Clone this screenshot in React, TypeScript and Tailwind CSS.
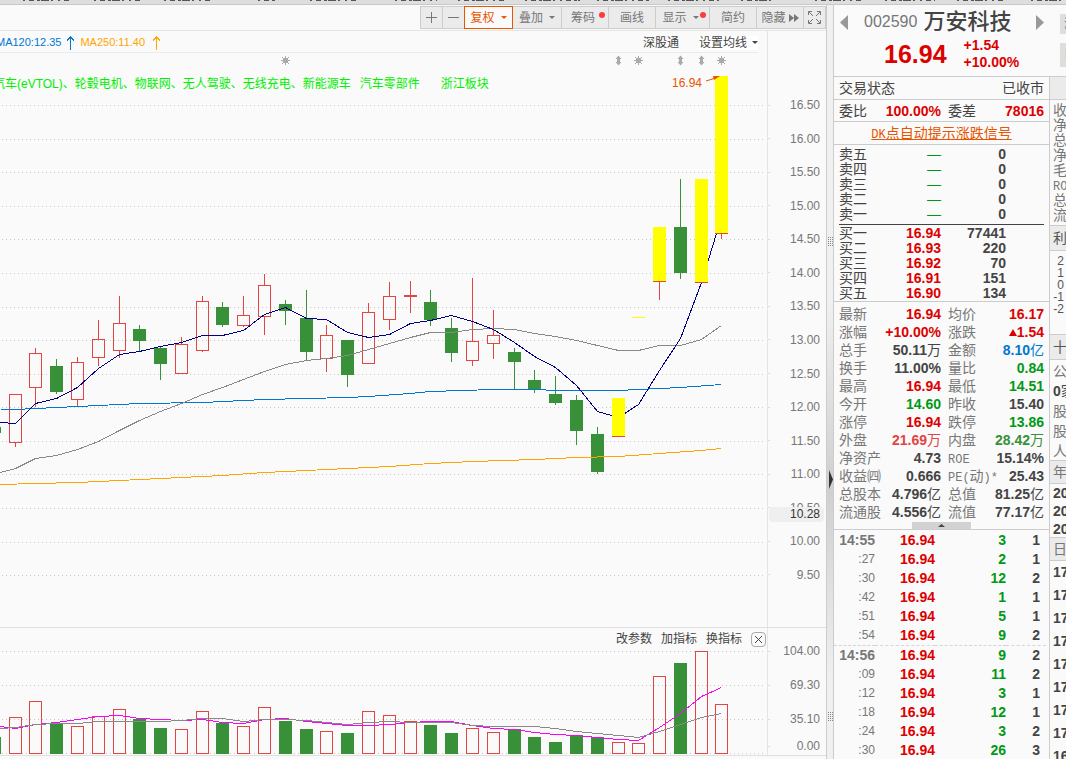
import React from "react";
import clsx from "clsx";

type Kind = "up" | "down" | "limit" | "flat";

// x, open/close top, open/close bottom, high, low, volume top
type Candle = [Kind, number, number, number, number, number, number];

const candles: Candle[] = [
  ["down", -6, 427, 433, 427, 433, 737],
  ["up", 15, 394, 442, 394, 447, 717],
  ["up", 35, 353, 387, 348, 407, 701],
  ["down", 56, 366, 392, 359, 394, 723],
  ["up", 77, 362, 399, 357, 406, 726],
  ["up", 98, 339, 357, 320, 366, 716],
  ["up", 119, 323, 350, 296, 358, 709],
  ["down", 139, 329, 341, 325, 352, 719],
  ["down", 160, 348, 364, 346, 380, 728],
  ["up", 181, 344, 373, 337, 373, 729],
  ["up", 202, 301, 350, 296, 352, 711],
  ["down", 222, 307, 325, 302, 327, 723],
  ["up", 243, 315, 325, 296, 327, 726],
  ["up", 264, 285, 316, 274, 335, 707],
  ["down", 285, 304, 311, 300, 325, 721],
  ["down", 306, 318, 352, 290, 360, 729],
  ["up", 326, 335, 358, 325, 372, 731],
  ["down", 347, 340, 375, 340, 387, 733],
  ["up", 368, 312, 363, 303, 363, 711],
  ["up", 389, 296, 319, 282, 330, 715],
  ["up", 410, 295, 296, 281, 313, 721],
  ["down", 430, 302, 320, 290, 326, 725],
  ["down", 451, 328, 353, 318, 362, 733],
  ["up", 472, 341, 360, 278, 366, 728],
  ["up", 493, 335, 343, 310, 359, 732],
  ["down", 514, 352, 362, 348, 389, 729],
  ["down", 534, 380, 389, 370, 393, 737],
  ["down", 555, 394, 403, 376, 405, 742],
  ["down", 576, 400, 431, 395, 445, 735],
  ["down", 597, 434, 472, 427, 474, 737],
  ["limit", 618, 398, 436, 398, 436, 742],
  ["flat", 638, 317, 317, 317, 317, 743],
  ["limit", 659, 227, 281, 227, 299, 676],
  ["down", 680, 227, 273, 179, 279, 663],
  ["limit", 701, 179, 282, 179, 282, 651],
  ["limit", 721, 76, 233, 76, 238, 704],
];

const ma5 =
  "0,422 15,423 35,403 56,398 77,387 98,368 119,354 139,351 160,346 181,342 202,335 222,335 243,330 264,314 285,307 306,318 326,319 347,332 368,337 389,334 410,323 430,320 451,315 472,321 493,329 514,342 534,356 555,367 576,385 597,411 618,417 638,404 659,370 680,338 701,282 716,233 721,220";
const ma20 =
  "0,472 15,468 35,458 56,455 77,449 98,441 119,430 139,420 160,411 181,403 202,394 222,387 243,379 264,371 285,364 306,360 326,358 347,355 368,349 389,343 410,337 430,332 451,332 472,329 493,328 514,329 534,333 555,336 576,340 597,345 618,350 638,350 659,345 680,345 701,339 721,325";
const ma120 =
  "0,409 15,409 35,408 77,406 98,405 139,403 202,402 264,399 306,398 347,397 368,396 410,393 430,391 493,389 514,389 576,390 618,390 638,389 680,387 721,384";
const ma250 =
  "0,484 35,483 77,482 119,480 160,478 222,475 264,472 306,470 347,468 389,466 430,463 472,461 534,459 555,458 576,457 618,456 659,453 701,450 721,448";
const volFast =
  "0,726 15,728 35,724 56,722 77,719 98,716 119,715 139,718 160,719 181,720 202,719 222,722 243,723 264,719 285,718 306,721 326,723 347,725 368,725 389,724 410,722 430,721 451,721 472,725 493,728 514,729 534,732 555,734 576,735 597,737 618,739 638,740 659,727 680,713 701,696 721,687";
const volSlow =
  "0,728 15,727 35,724 56,723 77,723 98,721 160,721 181,720 202,718 222,718 243,721 264,719 285,719 306,720 347,724 368,722 389,721 410,722 451,722 472,725 493,726 534,726 555,728 576,731 597,733 618,735 638,737 659,731 680,724 701,717 721,713";

const gridY = [105, 139, 172, 206, 239, 273, 307, 340, 374, 407, 441, 474, 508, 542, 575];
const priceLabels = [
  "16.50", "16.00", "15.50", "15.00", "14.50", "14.00", "13.50", "13.00",
  "12.50", "12.00", "11.50", "11.00", "10.50", "10.00", "9.50",
];

const RED = "#e34444";
const GREEN = "#389038";
const ORANGE = "#e85400";

const tabs: [number, number][] = [
  [23, 69], [94, 143], [164, 213], [258, 276], [310, 358], [395, 437], [458, 505], [525, 580],
  [597, 650], [668, 719], [741, 775], [815, 862], [885, 935], [957, 1005], [1031, 1066],
];

function TabStrip() {
  return (
    <div className="h-[5px] shrink-0 overflow-hidden border-b border-[#c8c8c8] bg-[#dedede]">
      <svg width="1066" height="1" shapeRendering="crispEdges" aria-hidden="true">
        {tabs.map(([a, b]) => (
          <line key={a} x1={a} x2={b} y1="0.5" y2="0.5" stroke="#555" strokeDasharray="2 4 5 3 3 1 8 2 2 5" />
        ))}
      </svg>
    </div>
  );
}

function Caret({ className }: { className?: string }) {
  return (
    <svg width="6" height="3" viewBox="0 0 6 3" className={clsx("shrink-0", className)} aria-hidden="true">
      <path d="M0 0h6L3 3z" fill="currentColor" />
    </svg>
  );
}

function Dot() {
  return <span className="absolute top-[5px] right-[3px] size-[6px] rounded-full bg-[#ff3b3b]" />;
}

const toolBtn =
  "relative flex h-[23px] items-center justify-center border-y border-l border-[#ccc] bg-[#ebebeb] text-xs whitespace-nowrap text-[#777]";

function Toolbar() {
  return (
    <div className="flex h-[26px] shrink-0 justify-end border-b border-[#e5e5e5] pt-px">
      <button className={clsx(toolBtn, "w-[22px]")} aria-label="放大">
        <svg width="11" height="11" shapeRendering="crispEdges">
          <path d="M0 5.5h11M5.5 0v11" stroke="currentColor" />
        </svg>
      </button>
      <button className={clsx(toolBtn, "w-[22px]")} aria-label="缩小">
        <svg width="11" height="11" shapeRendering="crispEdges">
          <path d="M0 5.5h11" stroke="currentColor" />
        </svg>
      </button>
      <button className="flex h-[23px] w-[49px] items-center justify-center gap-[6px] border border-[#e85400] bg-[#fafafa] text-xs text-[#e85400]">
        复权
        <Caret />
      </button>
      <button className={clsx(toolBtn, "w-[48px] gap-[6px] border-l-0")}>
        叠加
        <Caret />
      </button>
      <button className={clsx(toolBtn, "w-[47px] pr-1")}>
        筹码
        <Dot />
      </button>
      <button className={clsx(toolBtn, "w-[47px]")}>画线</button>
      <button className={clsx(toolBtn, "w-[54px] gap-[6px] pr-1")}>
        显示
        <Caret />
        <Dot />
      </button>
      <button className={clsx(toolBtn, "w-[47px]")}>简约</button>
      <button className={clsx(toolBtn, "w-[47px] gap-[3px]")}>
        隐藏
        <svg width="10" height="8" viewBox="0 0 10 8">
          <path d="M0 0l5 4-5 4zM5 0l5 4-5 4z" fill="currentColor" />
        </svg>
      </button>
      <button className={clsx(toolBtn, "w-[23px] border-r")} aria-label="全屏">
        <svg width="13" height="13" viewBox="0 0 13 13" fill="none" stroke="currentColor">
          <path d="M.5 4V.5H4M9 .5h3.500V4M12.500 9v3.500H9M4 12.500H.5V9M1 1l4 4M12 1L8 5M12 12L8 8M1 12l4-4" />
        </svg>
      </button>
    </div>
  );
}

function UpArrow({ className }: { className: string }) {
  return (
    <svg width="7" height="14" viewBox="0 0 7 14" className={className} fill="none" stroke="currentColor" shapeRendering="crispEdges">
      <path d="M3.500 0v14M.5 5V4L3.500 1l3 3v1" />
    </svg>
  );
}

function InfoLine() {
  return (
    <div className="flex h-[22px] flex-1 items-center overflow-hidden border-b border-[#ebebeb] pt-[2px] whitespace-nowrap">
      <span className="-ml-1 text-[11px] text-[#0078d0]">MA120:12.35</span>
      <UpArrow className="ml-[6px] shrink-0 text-[#0078d0]" />
      <span className="ml-[6px] text-[11px] text-[#ffa500]">MA250:11.40</span>
      <UpArrow className="ml-[8px] shrink-0 text-[#ffa500]" />
      <a href="#sgt" className="ml-auto text-xs text-[#444]">深股通</a>
      <button className="ml-5 flex items-center gap-[5px] bg-white text-xs leading-[14px] text-[#444]">
        设置均线
        <Caret />
      </button>
    </div>
  );
}

function Sun({ x }: { x: number }) {
  return (
    <g transform={`translate(${x} 60)`} stroke="#aaa" fill="#aaa">
      <rect x="-2" y="-2" width="5" height="5" stroke="none" />
      <path d="M.5-4v9M-4 .5h9M-3-3l7 7M4-3l-7 7" />
    </g>
  );
}

function Split({ x }: { x: number }) {
  return (
    <path transform={`translate(${x} 60)`} d="M.5-4.500L3.500-1H2v3h1.500L.5 5.500-2.500 2H-1v-3h-1.500z" fill="#aaa" />
  );
}

function CandleShape({ c }: { c: Candle }) {
  const [kind, x, top, bottom, high, low] = c;
  if (kind === "flat") return <rect x={x - 6} y={top} width="13" height="1" fill="#ffff00" />;
  if (kind === "limit") {
    return (
      <g>
        <rect x={x - 6} y={top} width="13" height={bottom - top} fill="#ffff00" />
        <rect x={x - 6} y={bottom} width="13" height="1" fill={RED} />
        {low > bottom && <rect x={x} y={bottom} width="1" height={low - bottom + 1} fill={RED} />}
      </g>
    );
  }
  if (kind === "down") {
    return (
      <g fill={GREEN}>
        <rect x={x} y={high} width="1" height={low - high} />
        <rect x={x - 6} y={top} width="13" height={bottom - top} />
      </g>
    );
  }
  return (
    <g>
      <rect x={x} y={high} width="1" height={top - high} fill={RED} />
      <rect x={x} y={bottom} width="1" height={low - bottom} fill={RED} />
      <rect x={x - 5.5} y={top + 0.5} width="12" height={bottom - top} fill="none" stroke={RED} />
    </g>
  );
}

function Grid({ rows }: { rows: number[] }) {
  return (
    <g stroke="#c8c8c8" strokeDasharray="1 3">
      {rows.map((y) => (
        <line key={y} x1="2" x2="764" y1={y + 0.5} y2={y + 0.5} />
      ))}
    </g>
  );
}

function PriceChart() {
  const limits = candles.filter((c) => c[0] === "limit" || c[0] === "flat");
  const plain = candles.filter((c) => c[0] === "up" || c[0] === "down");
  return (
    <svg width="767" height="574" viewBox="0 53 767 574" className="shrink-0" role="img" aria-label="K线图">
      <g shapeRendering="crispEdges">
        <Grid rows={gridY} />
        {plain.map((c) => (
          <CandleShape key={c[1]} c={c} />
        ))}
        <g fill="none" transform="translate(.5 .5)">
          <polyline points={ma250} stroke="#ffa500" />
          <polyline points={ma120} stroke="#0078d0" />
          <polyline points={ma20} stroke="#888" />
          <polyline points={ma5} stroke="#000080" />
        </g>
        {limits.map((c) => (
          <CandleShape key={c[1]} c={c} />
        ))}
      </g>
      {[285, 638, 721].map((x) => (
        <Sun key={x} x={x} />
      ))}
      {[618, 680, 701].map((x) => (
        <Split key={x} x={x} />
      ))}
      <text x="672" y="87" fontSize="12" fill={ORANGE}>16.94</text>
      <path d="M706 81l8-2.500" stroke={ORANGE} />
      <path d="M713 76h7l-6 4z" fill={ORANGE} />
    </svg>
  );
}

function VolumeChart() {
  return (
    <svg width="767" height="105" viewBox="0 650 767 105" className="shrink-0" role="img" aria-label="成交量" shapeRendering="crispEdges">
      <Grid rows={[651, 685, 719, 753]} />
      {candles.map(([kind, x, , , , , top]) =>
        kind === "down" ? (
          <rect key={x} x={x - 6} y={top} width="13" height={754 - top} fill={GREEN} />
        ) : (
          <rect key={x} x={x - 5.5} y={top + 0.5} width="12" height={753 - top} fill="none" stroke={RED} />
        )
      )}
      <g fill="none" transform="translate(.5 .5)">
        <polyline points={volFast} stroke="#ff00ff" />
        <polyline points={volSlow} stroke="#888" />
      </g>
    </svg>
  );
}

function AxisLabel({ children }: { children: string }) {
  return (
    <div className="flex h-4 items-center justify-between pr-[6px] text-xs text-[#777]">
      <span className="h-px w-[2px] bg-[#ddd]" />
      {children}
    </div>
  );
}

function ChartPane() {
  return (
    <main className="flex min-w-0 flex-1 flex-col">
      <Toolbar />
      <div className="flex border-b border-[#e0e0e0]">
        <div className="flex min-w-0 flex-1 flex-col">
          <div className="flex pr-[9px]">
            <InfoLine />
          </div>
          <div className="relative flex justify-end overflow-hidden">
            <PriceChart />
            <p className="absolute top-[23px] -left-[7px] text-xs whitespace-pre text-[#00f000]">
              汽车(eVTOL)、轮毂电机、物联网、无人驾驶、无线充电、新能源车
              <span className="ml-[9px]">汽车零部件</span>
              <span className="ml-[21px]">浙江板块</span>
            </p>
          </div>
        </div>
        <div className="relative flex w-[59px] flex-col justify-between border-l border-[#e5e5e5] pt-[66px] pb-11">
          {priceLabels.map((p) => (
            <AxisLabel key={p}>{p}</AxisLabel>
          ))}
          <span className="absolute right-[2px] bottom-[105px] left-px rounded-sm bg-[#efefef] pr-1 text-right text-xs leading-[15px] text-[#333]">
            10.28
          </span>
        </div>
      </div>
      <div className="flex border-b border-[#e0e0e0]">
        <div className="flex min-w-0 flex-1 flex-col items-end overflow-hidden">
          <div className="flex h-[22px] items-center gap-[9px] pr-px text-xs text-[#444]">
            <button>改参数</button>
            <button>加指标</button>
            <button>换指标</button>
            <button className="flex size-[15px] items-center justify-center rounded-sm border border-[#aaa]" aria-label="关闭">
              <svg width="7" height="7" viewBox="0 0 7 7" stroke="#444">
                <path d="M0 0l7 7M7 0L0 7" />
              </svg>
            </button>
          </div>
          <VolumeChart />
        </div>
        <div className="flex w-[59px] flex-col gap-[18px] border-l border-[#e5e5e5] pt-[15px]">
          <AxisLabel>104.00</AxisLabel>
          <AxisLabel>69.30</AxisLabel>
          <AxisLabel>35.10</AxisLabel>
          <div className="-mt-[7px]">
            <AxisLabel>0.00</AxisLabel>
          </div>
        </div>
      </div>
    </main>
  );
}

function Grip() {
  return (
    <svg width="5" height="9" shapeRendering="crispEdges" aria-hidden="true">
      <path d="M0 .5h5M0 2.500h5M0 4.500h5M0 6.500h5M0 8.500h5" stroke="#888" strokeDasharray="1 1" />
    </svg>
  );
}

function Splitter() {
  return (
    <div className="flex w-2 shrink-0 flex-col items-center justify-between border-x border-[#ccc] bg-linear-to-b from-[#f0f0f0] from-40% via-[#cfcfcf] via-64% to-[#f0f0f0] to-90% pt-[232px] pb-[38px]">
      <Grip />
      <button aria-label="收起">
        <svg width="5" height="19" viewBox="0 0 5 19">
          <path d="M1 0l4 9.500L1 19z" fill="#333" />
        </svg>
      </button>
      <Grip />
    </div>
  );
}

const tone = {
  red: "text-[#dd0000]",
  rose: "text-[#e34444]",
  green: "text-[#009916]",
  leaf: "text-[#389038]",
  dark: "text-[#444]",
  blue: "text-[#0078d0]",
};
type Tone = keyof typeof tone;

function Value({ text, color }: { text: string; color: Tone }) {
  const unit = /[万亿]$/.test(text) ? text.slice(-1) : "";
  const num = unit ? text.slice(0, -1) : text;
  return (
    <span className={clsx("font-bold whitespace-nowrap", tone[color])}>
      {num}
      {unit && <span className="font-normal">{unit}</span>}
    </span>
  );
}

function Mono({ children }: { children: React.ReactNode }) {
  return <span className="font-['Liberation_Mono',monospace] text-xs leading-none">{children}</span>;
}

const stats: [string, string, Tone, React.ReactNode, string, Tone][] = [
  ["最新", "16.94", "red", "均价", "16.17", "red"],
  ["涨幅", "+10.00%", "red", "涨跌", "1.54", "red"],
  ["总手", "50.11万", "dark", "金额", "8.10亿", "blue"],
  ["换手", "11.00%", "dark", "量比", "0.84", "green"],
  ["最高", "16.94", "red", "最低", "14.51", "green"],
  ["今开", "14.60", "green", "昨收", "15.40", "dark"],
  ["涨停", "16.94", "red", "跌停", "13.86", "green"],
  ["外盘", "21.69万", "rose", "内盘", "28.42万", "leaf"],
  ["净资产", "4.73", "dark", <Mono>ROE</Mono>, "15.14%", "dark"],
  ["收益㈣", "0.666", "dark", <><Mono>PE(</Mono>动<Mono>)*</Mono></>, "25.43", "dark"],
  ["总股本", "4.796亿", "dark", "总值", "81.25亿", "dark"],
  ["流通股", "4.556亿", "dark", "流值", "77.17亿", "dark"],
];

const sells = ["卖五", "卖四", "卖三", "卖二", "卖一"];
const buys = [
  ["买一", "16.94", "77441"],
  ["买二", "16.93", "220"],
  ["买三", "16.92", "70"],
  ["买四", "16.91", "151"],
  ["买五", "16.90", "134"],
];

const ticks = [
  [
    ["14:55", "3", "1"],
    [":27", "2", "1"],
    [":30", "12", "2"],
    [":42", "1", "1"],
    [":51", "5", "1"],
    [":54", "9", "2"],
  ],
  [
    ["14:56", "9", "2"],
    [":09", "11", "2"],
    [":12", "3", "1"],
    [":18", "12", "1"],
    [":24", "3", "2"],
    [":30", "26", "3"],
  ],
];

function OrderBook() {
  return (
    <div className="border-b border-[#ccc] pt-[2px] pr-[5px] pl-[5px] leading-[15px] text-[#444]">
      <table className="w-full table-fixed border-collapse">
        <tbody>
          {sells.map((s) => (
            <tr key={s} className="h-[15px]">
              <td className="p-0">{s}</td>
              <td className="w-[50px] p-0 text-right text-[#009916]">—</td>
              <td className="w-[65px] p-0 text-right font-bold">0</td>
              <td className="w-[38px] p-0" />
            </tr>
          ))}
        </tbody>
      </table>
      <hr className="mt-[2px] mb-px border-[#444]" />
      <table className="w-full table-fixed border-collapse">
        <tbody>
          {buys.map(([label, price, qty]) => (
            <tr key={label} className="h-[15px]">
              <td className="p-0">{label}</td>
              <td className="w-[50px] p-0 text-right font-bold text-[#dd0000]">{price}</td>
              <td className="w-[65px] p-0 text-right font-bold">{qty}</td>
              <td className="w-[38px] p-0" />
            </tr>
          ))}
        </tbody>
      </table>
    </div>
  );
}

function Stats() {
  return (
    <div className="border-b border-[#ccc] pt-[3px]">
      <table className="w-full table-fixed border-collapse leading-[18px]">
        <tbody>
          {stats.map(([a, av, ac, b, bv, bc], i) => (
            <tr key={i} className="h-[18px] text-[#777]">
              <td className="w-[48px] p-0 pl-[5px] whitespace-nowrap">{a}</td>
              <td className="p-0 text-right">
                <Value text={av} color={ac} />
              </td>
              <td className="w-[58px] p-0 pl-[7px] whitespace-nowrap">{b}</td>
              <td className="w-[50px] p-0 pr-[5px]">
                <div className="flex items-center justify-end">
                  {b === "涨跌" && (
                    <svg width="8" height="7" viewBox="0 0 8 7" className="shrink-0">
                      <path d="M4 0l4 7H0z" fill="#dd0000" />
                    </svg>
                  )}
                  <Value text={bv} color={bc} />
                </div>
              </td>
            </tr>
          ))}
        </tbody>
      </table>
      <button className="mx-auto mt-px flex h-[7px] w-[59px] items-center justify-center bg-[#d2d2d2]" aria-label="收起行情">
        <svg width="7" height="3" viewBox="0 0 7 3">
          <path d="M3.500 0L7 3H0z" fill="#444" />
        </svg>
      </button>
    </div>
  );
}

function Ticks() {
  return (
    <div className="pt-px pr-[3px]">
      {ticks.map((group, g) => (
        <table key={g} className={clsx("w-full table-fixed border-collapse leading-[19px]", g > 0 && "border-t border-dashed border-[#d5d5d5]")}>
          <tbody>
            {group.map(([time, vol, n], i) => (
              <tr key={time} className="h-[19px] text-right font-bold">
                <td className={clsx("w-[41px] p-0 text-[#777]", i > 0 && "text-xs leading-[19px] font-normal")}>{time}</td>
                <td className="w-[60px] p-0 text-[#dd0000]">16.94</td>
                <td className="p-0 text-[#009916]">{vol}</td>
                <td className="w-[40px] p-0 pr-[6px] text-[#444]">{n}</td>
              </tr>
            ))}
          </tbody>
        </table>
      ))}
    </div>
  );
}

function SideHead({ children }: { children?: string }) {
  return <h3 className="h-[26px] border-y border-[#ccc] bg-[#ebebeb] pl-[3px] leading-6 text-[#555]">{children}</h3>;
}

// next panel, mostly cut off by the window edge
function SidePanel() {
  return (
    <div className="min-w-0 flex-1 overflow-hidden border-l border-[#ccc] whitespace-nowrap text-[#777]">
      <div className="h-[23px] border-b border-[#ccc] bg-[#ebebeb]" />
      <ul className="h-[125px] pt-[3px] pl-[3px] leading-[15px]">
        {["收", "净", "总", "净", "毛"].map((t, i) => (
          <li key={i}>{t}</li>
        ))}
        <li>
          <Mono>ROE</Mono>
        </li>
        <li>总</li>
        <li>流</li>
      </ul>
      <SideHead>利润</SideHead>
      <ul className="h-[83px] pt-[4px] pr-[2px] text-right text-xs leading-3 text-[#555]">
        <li>2</li>
        <li>1</li>
        <li>0</li>
        <li>-1</li>
        <li>-2</li>
      </ul>
      <SideHead>十大</SideHead>
      <ul className="h-[100px] pt-px pl-[3px] leading-5">
        <li>公司</li>
        <li className="text-[#444]">
          <b>0</b>家
        </li>
        <li>股</li>
        <li>股</li>
        <li>人</li>
      </ul>
      <h3 className="h-6 border-y border-[#ccc] bg-[#ebebeb] pl-[3px] leading-[22px]">年</h3>
      <ul className="h-[53px] overflow-hidden pl-[3px] leading-[18px] font-semibold text-[#444]">
        <li>20</li>
        <li>20</li>
        <li>20</li>
      </ul>
      <h3 className="h-6 border-y border-[#ccc] bg-[#ebebeb] pl-[3px] leading-[22px]">日</h3>
      <ul className="pl-[3px] leading-[23px] font-semibold text-[#444]">
        {["17", "17", "17", "17", "17", "17", "17", "17", "16"].map((t, i) => (
          <li key={i}>{t}</li>
        ))}
      </ul>
    </div>
  );
}

function QuoteHeader() {
  return (
    <header className="flex h-[72px] shrink-0 border-b border-[#ccc]">
      <div className="flex-1">
        <div className="flex h-[34px] items-center pl-[6px]">
          <button aria-label="上一只">
            <svg width="8" height="15" viewBox="0 0 8 15">
              <path d="M8 0v15L0 7.500z" fill="#999" />
            </svg>
          </button>
          <span className="ml-4 text-base text-[#777]">002590</span>
          <h1 className="ml-[6px] text-[22px] leading-8 font-medium whitespace-nowrap text-[#444]">万安科技</h1>
          <button className="ml-[25px]" aria-label="下一只">
            <svg width="8" height="15" viewBox="0 0 8 15">
              <path d="M0 0v15l8-7.500z" fill="#999" />
            </svg>
          </button>
        </div>
        <div className="flex h-[30px] items-center gap-[17px] pl-[50px] font-bold text-[#dd0000]">
          <strong className="text-[25px] leading-7">16.94</strong>
          <div className="leading-[17px]">
            <div>+1.54</div>
            <div>+10.00%</div>
          </div>
        </div>
      </div>
      <div className="flex w-[6px] flex-col gap-[9px] overflow-hidden pt-[9px] text-xs leading-5 text-[#777]">
        <button className="h-5 overflow-hidden bg-[#dedede] pl-1">添</button>
        <button className="h-6 overflow-hidden bg-[#dedede] pl-1">日</button>
      </div>
    </header>
  );
}

export default function App() {
  return (
    <div className="flex h-screen flex-col overflow-hidden bg-[#fafafa] font-['Liberation_Sans','Noto_Sans_CJK_SC',sans-serif] text-sm">
      <TabStrip />
      <div className="flex min-h-0 flex-1">
        <ChartPane />
        <Splitter />
        <aside className="flex w-[232px] shrink-0 flex-col">
          <QuoteHeader />
          <div className="flex min-h-0 flex-1">
            <section className="w-[215px] shrink-0 overflow-hidden">
              <div className="flex h-[23px] items-center justify-between border-b border-[#ccc] px-[5px] text-[#444]">
                <span>交易状态</span>
                <span>已收市</span>
              </div>
              <div className="flex h-[22px] items-center border-b border-[#ccc] px-[5px] text-[#444]">
                <span>委比</span>
                <b className="ml-auto text-[#dd0000]">100.00%</b>
                <span className="ml-[7px] w-[46px]">委差</span>
                <b className="w-[50px] text-right text-[#dd0000]">78016</b>
              </div>
              <div className="flex h-[23px] items-center justify-center border-b border-[#ccc]">
                <a href="#dk" className="text-[#e85400] underline">
                  <Mono>DK</Mono>点自动提示涨跌信号
                </a>
              </div>
              <OrderBook />
              <Stats />
              <Ticks />
            </section>
            <SidePanel />
          </div>
        </aside>
      </div>
    </div>
  );
}
